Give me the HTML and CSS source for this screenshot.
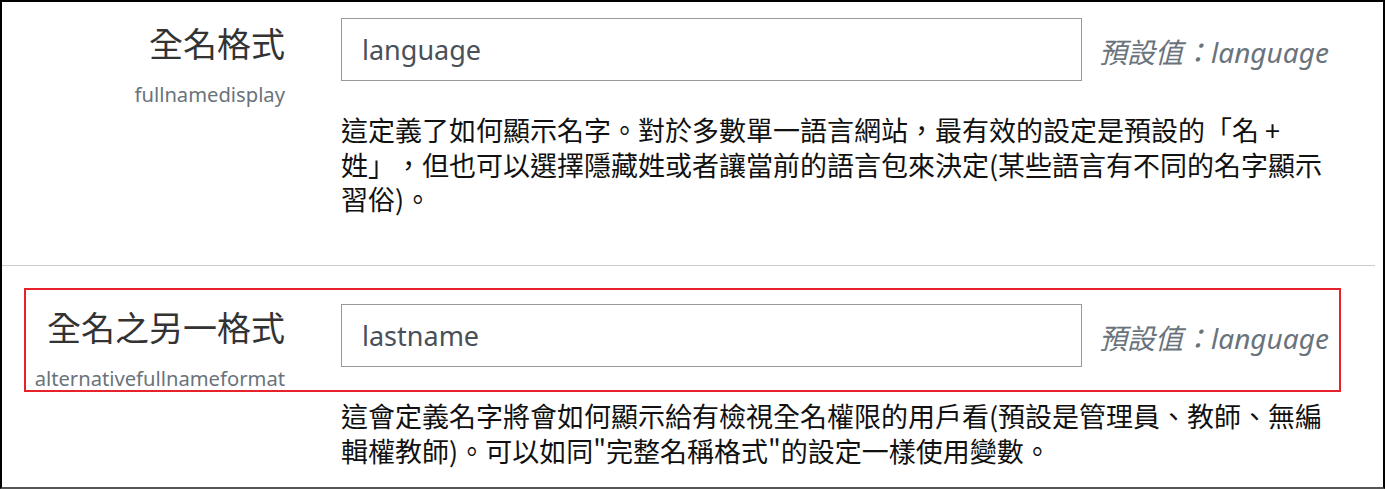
FILE: index.html
```html
<!DOCTYPE html>
<html lang="zh-Hant">
<head>
<meta charset="utf-8">
<title>全名格式</title>
<link rel="stylesheet" href="styles.css">
</head>
<body>
<div class="frame">
  <section class="setting">
    <div class="row">
      <div class="label">
        <div class="title">全名格式</div>
        <div class="name">fullnamedisplay</div>
      </div>
      <input class="field" type="text" value="language">
      <div class="default">預設值：language</div>
    </div>
    <div class="desc">這定義了如何顯示名字。對於多數單一語言網站，最有效的設定是預設的「名 + 姓」，但也可以選擇隱藏姓或者讓當前的語言包來決定(某些語言有不同的名字顯示習俗)。</div>
  </section>
  <hr class="sep">
  <section class="setting setting-boxed">
    <div class="row boxed">
      <div class="label">
        <div class="title">全名之另一格式</div>
        <div class="name">alternativefullnameformat</div>
      </div>
      <input class="field" type="text" value="lastname">
      <div class="default">預設值：language</div>
    </div>
    <div class="desc">這會定義名字將會如何顯示給有檢視全名權限的用戶看(預設是管理員、教師、無編輯權教師)。可以如同"完整名稱格式"的設定一樣使用變數。</div>
  </section>
</div>
</body>
</html>
```
FILE: styles.css
```css
html, body {
  margin: 0;
  padding: 0;
  background: #fff;
}
body {
  font-family: "Noto Sans", "Noto Sans CJK TC", sans-serif;
  text-spacing-trim: space-all;
}
.frame {
  box-sizing: border-box;
  width: 1385px;
  height: 489px;
  overflow: hidden;
  border-top: 2px solid #000;
  border-left: 2px solid #000;
  border-right: 2px solid #000;
  border-bottom: 2px solid #555;
}
.setting {
  padding-top: 16px;
}
.row {
  display: flex;
  align-items: flex-start;
}
.label {
  width: 283px;
  flex: none;
  text-align: right;
}
.title {
  font-family: "Noto Sans CJK TC", sans-serif;
  font-size: 34px;
  line-height: 50px;
  color: #333;
}
.name {
  font-family: "Noto Sans", sans-serif;
  font-size: 20.2px;
  line-height: 24px;
  margin-top: 14px;
  color: #6a737b;
}
.field {
  box-sizing: border-box;
  margin: 0 0 0 56px;
  width: 741px;
  height: 63px;
  border: 1px solid #999;
  border-radius: 0;
  padding: 0 0 0 20px;
  font-family: "Noto Sans", sans-serif;
  font-size: 27px;
  color: #495057;
  background: #fff;
  outline: none;
}
.default {
  margin-left: 17px;
  height: 63px;
  padding-top: 2px;
  box-sizing: border-box;
  display: flex;
  align-items: center;
  font-family: "Noto Sans", "Noto Sans CJK TC", sans-serif;
  font-style: italic;
  font-size: 28px;
  color: #6a737b;
  white-space: nowrap;
  text-spacing-trim: space-all;
}
.desc {
  margin: 7px 0 0 339px;
  width: 990px;
  font-family: "Noto Sans CJK TC", sans-serif;
  font-size: 27px;
  line-height: 34.7px;
  color: #111;
  text-spacing-trim: space-all;
}
.sep {
  margin: 48px 8px 0 0;
  border: 0;
  border-top: 1px solid #ccc;
  height: 0;
}
.setting-boxed {
  padding-top: 22px;
}
.boxed {
  margin-left: 22px;
  width: 1317px;
  box-sizing: border-box;
  border: 2px solid #e8222a;
  padding-top: 12px;
}
.boxed .label {
  width: 259px;
}
.boxed .field {
  margin-top: 2px;
}
.boxed .default {
  margin-top: 2px;
}
.setting-boxed .desc {
  margin-top: 7px;
}
```
